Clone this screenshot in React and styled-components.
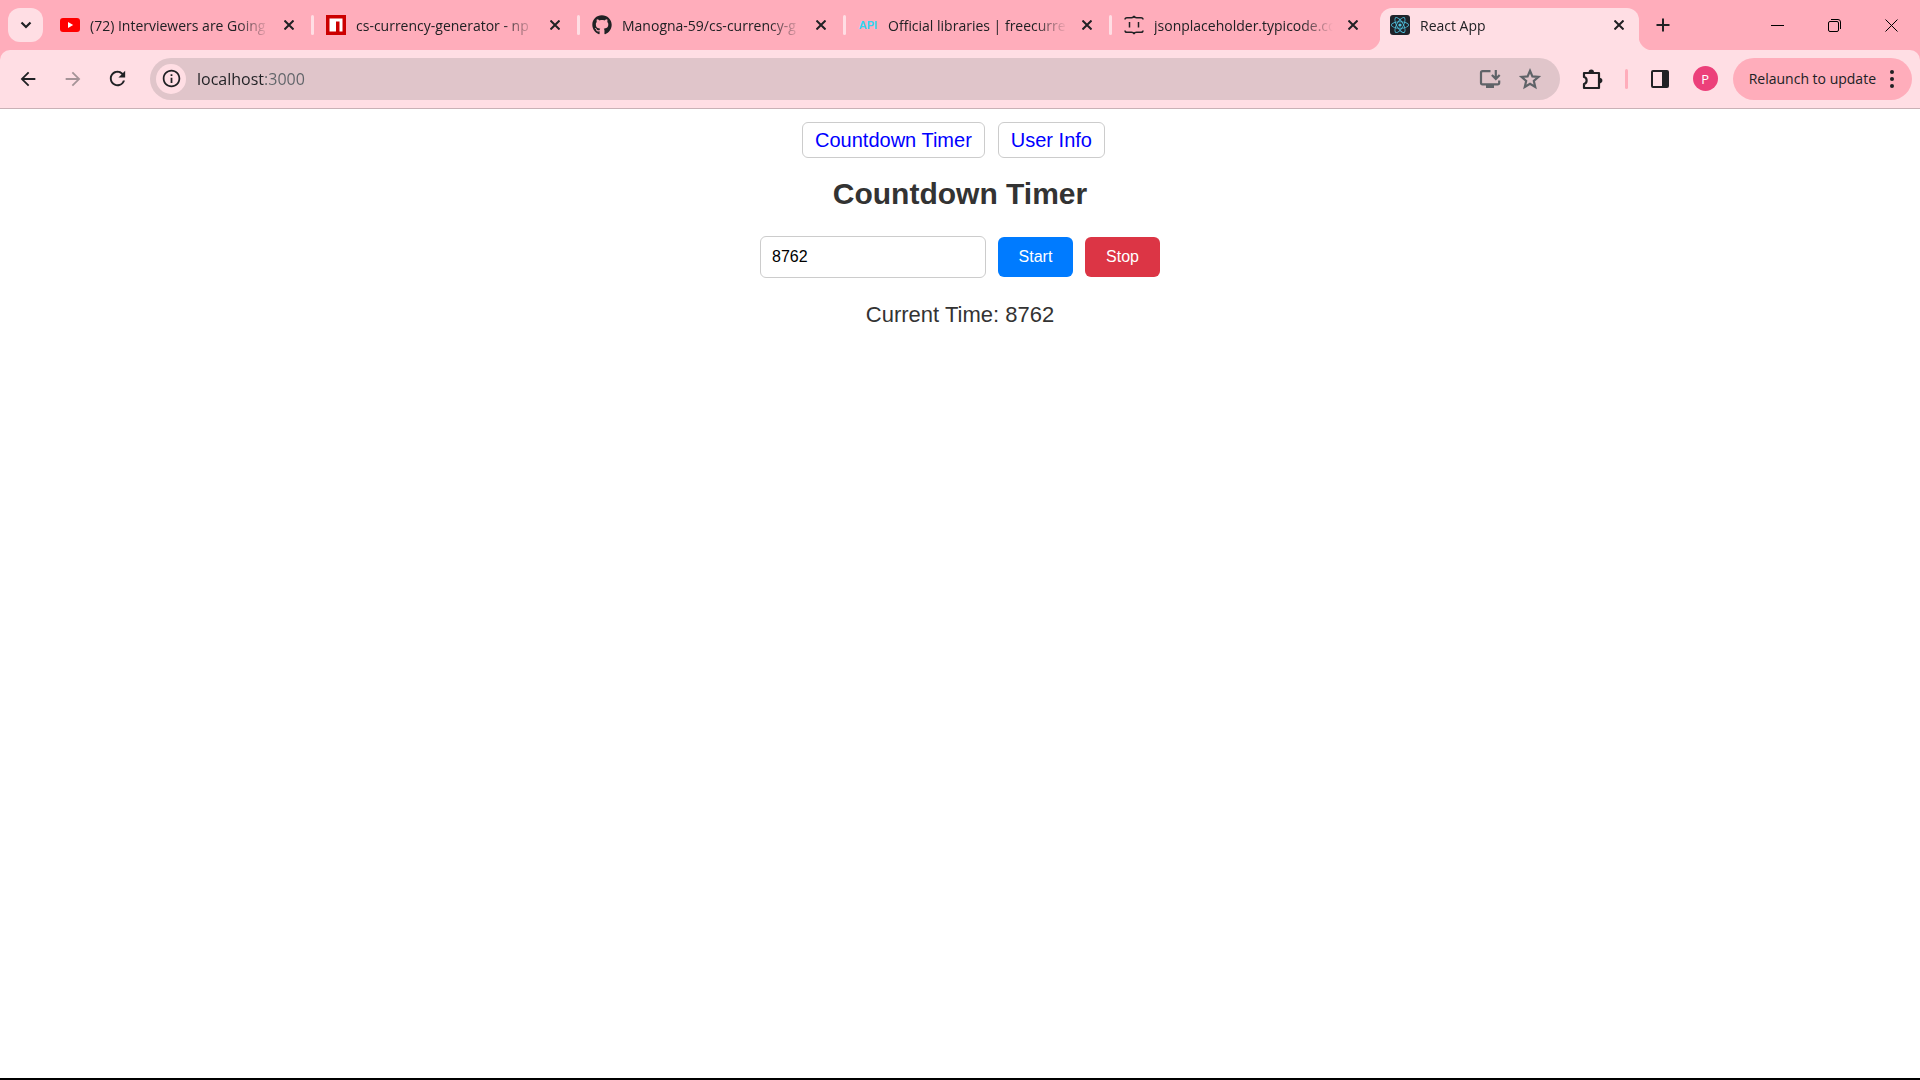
import React, { useEffect, useState } from "react";
import styled, { createGlobalStyle, css } from "styled-components";
import { FaGithub, FaReact } from "react-icons/fa";
import {
  MdArrowBack,
  MdArrowForward,
  MdRefresh,
  MdInfoOutline,
} from "react-icons/md";

const color = {
  frame: "#ffadbb",
  toolbar: "#ffdee4",
  field: "#e0c5ca",
  line: "#c9b1b6",
  ink: "#202124",
  muted: "#5f6368",
};

const uiFont = '"Open Sans", "Noto Sans", sans-serif';
const pageFont = '"Liberation Sans", Arial, sans-serif';

const GlobalStyle = createGlobalStyle`
  *, *::before, *::after { box-sizing: border-box; }
  body { margin: 0; background: #fff; }
  button, input { font: inherit; margin: 0; }
`;

const Window = styled.div`
  display: flex;
  flex-direction: column;
  min-height: 100vh;
  border-bottom: 2px solid #000;
`;

const Frame = styled.header`
  background: ${color.frame};
  color: ${color.ink};
  font-family: ${uiFont};
  font-size: 14px;
`;

const TabStrip = styled.div`
  display: flex;
  height: 50px;
  padding-left: 8px;
`;

const PlainButton = styled.button`
  display: flex;
  align-items: center;
  justify-content: center;
  flex: none;
  padding: 0;
  border: 0;
  background: none;
  color: inherit;
`;

const TabSearch = styled(PlainButton)`
  width: 35px;
  height: 34px;
  margin: 8px 7px 0 0;
  border-radius: 12px;
  background: ${color.toolbar};
`;

const Tabs = styled.div`
  display: flex;
  flex: 0 1 1589px;
  min-width: 0;
`;

const Tab = styled.div`
  display: flex;
  flex: 0 1 266px;
  align-items: center;
  min-width: 0;
  position: relative;
  height: 42px;
  margin-top: 8px;
  padding: 0 2px 8px 10px;

  ${({ $active }) =>
    $active &&
    css`
      flex: 1 1 258px;
      padding-right: 0;
      border-radius: 12px 12px 0 0;
      background: ${color.toolbar};

      &::before,
      &::after {
        content: "";
        position: absolute;
        bottom: 0;
        width: 14px;
        height: 14px;
      }
      &::before {
        right: 100%;
        background: radial-gradient(circle at 0 0, transparent 14px, ${color.toolbar} 15px);
      }
      &::after {
        left: 100%;
        background: radial-gradient(circle at 100% 0, transparent 14px, ${color.toolbar} 15px);
      }
    `}
`;

const Favicon = styled.span`
  display: flex;
  align-items: center;
  justify-content: center;
  flex: none;
  width: 20px;
  height: 20px;
  margin-right: 10px;
`;

const ApiMark = styled.span`
  color: #2fd6f2;
  font-family: ${pageFont};
  font-size: 11px;
  font-weight: 700;
  line-height: 20px;
`;

const ReactTile = styled(Favicon)`
  border-radius: 3px;
  background: #20232a;
  color: #4fc3e0;
`;

const TabTitle = styled.span`
  flex: 1;
  min-width: 0;
  overflow: hidden;
  padding-top: 2px;
  white-space: nowrap;
  line-height: 20px;
  mask-image: linear-gradient(to right, #000 calc(100% - 36px), transparent calc(100% - 4px));
`;

const TabClose = styled(PlainButton)`
  width: 16px;
  height: 20px;
  margin: 0 ${({ $edge }) => ($edge ? 12 : 14)}px 0 8px;
`;

const Separator = styled.span`
  flex: none;
  width: 3px;
  height: 20px;
  margin: 0 ${({ $space = 0 }) => $space}px;
  border-radius: 2px;
  background: ${({ $tone }) => $tone};
`;

const NewTab = styled(PlainButton)`
  width: 48px;
  height: 50px;
`;

const WindowControls = styled.div`
  display: flex;
  margin-left: auto;
`;

const WindowButton = styled(PlainButton)`
  width: 57px;
  height: 50px;
  color: #000;
`;

const Toolbar = styled.div`
  display: flex;
  align-items: center;
  height: 59px;
  padding: 0 8px 1px 5px;
  border-bottom: 1px solid ${color.line};
  border-radius: 10px 10px 0 0;
  background: ${color.toolbar};
`;

const ToolButton = styled(PlainButton)`
  width: 45px;
  height: 42px;
  color: ${({ $dim }) => ($dim ? "#a59397" : color.ink)};
`;

const AddressBar = styled.form`
  display: flex;
  flex: 1;
  align-items: center;
  min-width: 0;
  height: 42px;
  margin: 0 10px;
  padding: 0 10px 0 6px;
  border-radius: 21px;
  background: ${color.field};
`;

const SiteInfo = styled(PlainButton)`
  width: 30px;
  height: 30px;
  border-radius: 50%;
  background: ${color.toolbar};
`;

const Address = styled.input`
  flex: 1;
  min-width: 0;
  height: 30px;
  padding: 0 0 0 11px;
  border: 0;
  outline: 0;
  background: linear-gradient(to right, ${color.ink} 78px, ${color.muted} 78px);
  background-clip: text;
  -webkit-text-fill-color: transparent;
  font-size: 16px;
`;

const FieldButton = styled(PlainButton)`
  width: 40px;
  height: 40px;
  color: ${color.muted};
`;

const Avatar = styled(PlainButton)`
  width: 25px;
  height: 25px;
  margin: 0 15px 0 10px;
  border-radius: 50%;
  background: #ec407a;
  color: #fff;
  font-size: 13px;
`;

const Relaunch = styled(PlainButton)`
  gap: 14px;
  height: 42px;
  padding: 0 18px 0 16px;
  border-radius: 21px;
  background: ${color.frame};
  white-space: nowrap;
`;

const Page = styled.main`
  display: flex;
  flex: 1;
  flex-direction: column;
  align-items: center;
  padding-top: 13px;
  background: #fff;
  color: #333;
  font-family: ${pageFont};
`;

const Nav = styled.nav`
  display: flex;
`;

const NavLink = styled.a`
  margin-right: 13px;
  padding: 6px 12px;
  border: 1px solid #ccc;
  border-radius: 6px;
  color: #00f;
  font-size: 20px;
  line-height: 22px;
  text-decoration: none;
`;

const Heading = styled.h1`
  margin: 18px 0 25px;
  font-size: 30px;
  line-height: 35px;
`;

const TimerForm = styled.form`
  display: flex;
  align-items: center;
  gap: 12px;
`;

const Seconds = styled.input`
  width: 226px;
  height: 42px;
  padding: 0 11px;
  border: 1px solid #ccc;
  border-radius: 6px;
  background: #fff;
  color: #000;
  font-size: 16px;
`;

const TimerButton = styled.button`
  width: 75px;
  height: 40px;
  padding: 0;
  border: 0;
  border-radius: 6px;
  background: ${({ $tone }) => $tone};
  color: #fff;
  font-size: 16px;
`;

const Current = styled.p`
  margin: 24px 0 0;
  font-size: 22px;
  line-height: 26px;
`;

const Cross = ({ size = 10, weight = 2 }) => (
  <svg width={size} height={size} viewBox={`0 0 ${size} ${size}`} stroke="currentColor" strokeWidth={weight}>
    <path d={`M.5 .5L${size - 0.5} ${size - 0.5}M${size - 0.5} .5L.5 ${size - 0.5}`} />
  </svg>
);

const YouTubeIcon = () => (
  <svg width="20" height="20" viewBox="0 0 20 20">
    <rect y="3" width="20" height="14" rx="3" fill="#f00" />
    <path d="M8 7l5.2 3L8 13z" fill="#fff" />
  </svg>
);

const NpmIcon = () => (
  <svg width="20" height="20" viewBox="0 0 20 20">
    <path fill="#c00" d="M0 0h20v20H0z" />
    <path fill="#fff" d="M3.5 3.5h13v13h-3v-10H10v10H3.5z" />
  </svg>
);

const BracesIcon = () => (
  <svg width="20" height="20" viewBox="0 0 20 20" fill="none" stroke={color.ink} strokeWidth="1.5">
    <path d="M1 4.5Q1 2.7 3 2.7H7.5Q9.6 2.7 10 1Q10.4 2.7 12.5 2.7H17Q19 2.7 19 4.5M1 15.5Q1 17.3 3 17.3H7.5Q9.6 17.3 10 19Q10.4 17.3 12.5 17.3H17Q19 17.3 19 15.5M5.5 7v5.5M14.5 7v5.5" />
  </svg>
);

const InstallIcon = () => (
  <svg width="22" height="20" viewBox="0 0 22 20" fill="none" stroke="currentColor" strokeWidth="2.2">
    <path d="M11.5 2.2H3.6q-1.6 0-1.6 1.6v10q0 1.6 1.6 1.6h15q1.6 0 1.6-1.6v-2.2M16.8 1v8M12.9 6l3.9 3.9L20.7 6" />
    <path d="M7 15h8v4H7z" fill="currentColor" stroke="none" />
  </svg>
);

const StarIcon = () => (
  <svg width="24" height="24" viewBox="0 0 22 22" fill="none" stroke="currentColor" strokeWidth="2">
    <path d="M11 3.4L13.2 8.6L18.8 9.1L14.5 12.8L15.8 18.3L11 15.4L6.2 18.3L7.5 12.8L3.2 9.1L8.8 8.6Z" />
  </svg>
);

const ExtensionIcon = () => (
  <svg width="22" height="22" viewBox="0 0 22 22">
    <path
      d="M3 5h15v15H3v-4C6.5 15.2 6.5 9.8 3 9z"
      fill="none"
      stroke="currentColor"
      strokeWidth="2.2"
      strokeLinejoin="round"
    />
    <path d="M7.5 5a2.8 3.4 0 0 1 5.6 0zM18 9.8a3.4 2.8 0 0 1 0 5.6z" fill="currentColor" />
  </svg>
);

const SidePanelIcon = () => (
  <svg width="18" height="18" viewBox="0 0 18 18">
    <rect x="1" y="1" width="16" height="16" rx="1" fill="none" stroke="currentColor" strokeWidth="2" />
    <path d="M11 1h6v16h-6z" fill="currentColor" />
  </svg>
);

const DotsIcon = () => (
  <svg width="4" height="18" viewBox="0 0 4 18" fill="currentColor">
    <circle cx="2" cy="2" r="2" />
    <circle cx="2" cy="9" r="2" />
    <circle cx="2" cy="16" r="2" />
  </svg>
);

const openTabs = [
  { title: "(72) Interviewers are Going", icon: <YouTubeIcon /> },
  { title: "cs-currency-generator - np", icon: <NpmIcon /> },
  { title: "Manogna-59/cs-currency-g", icon: <FaGithub size={20} /> },
  { title: "Official libraries | freecurre", icon: <ApiMark>API</ApiMark> },
  { title: "jsonplaceholder.typicode.co", icon: <BracesIcon /> },
];

function BrowserFrame() {
  return (
    <Frame>
      <TabStrip>
        <TabSearch aria-label="Search tabs">
          <svg width="12" height="8" viewBox="0 0 12 8" fill="none" stroke="currentColor" strokeWidth="2.2">
            <path d="M1.5 1.5L6 6l4.5-4.5" />
          </svg>
        </TabSearch>
        <Tabs>
          {openTabs.map((tab, index) => (
            <Tab key={tab.title}>
              <Favicon>{tab.icon}</Favicon>
              <TabTitle>{tab.title}</TabTitle>
              <TabClose aria-label="Close tab">
                <Cross />
              </TabClose>
              <Separator $tone={index < openTabs.length - 1 ? color.toolbar : "transparent"} />
            </Tab>
          ))}
          <Tab $active>
            <ReactTile>
              <FaReact size={18} />
            </ReactTile>
            <TabTitle>React App</TabTitle>
            <TabClose aria-label="Close tab" $edge>
              <Cross />
            </TabClose>
          </Tab>
        </Tabs>
        <NewTab aria-label="New tab">
          <svg width="14" height="14" viewBox="0 0 14 14" stroke="currentColor" strokeWidth="2">
            <path d="M7 .5v13M.5 7h13" />
          </svg>
        </NewTab>
        <WindowControls>
          <WindowButton aria-label="Minimize">
            <svg width="13" height="13" viewBox="0 0 13 13" stroke="currentColor">
              <path d="M0 6.5h13" />
            </svg>
          </WindowButton>
          <WindowButton aria-label="Restore">
            <svg width="13" height="13" viewBox="0 0 13 13" fill="none" stroke="currentColor">
              <rect x=".5" y="2.5" width="10" height="10" rx="1.5" />
              <path d="M3 .5h7q2.5 0 2.5 2.5v7" />
            </svg>
          </WindowButton>
          <WindowButton aria-label="Close window">
            <Cross size={13} weight={1} />
          </WindowButton>
        </WindowControls>
      </TabStrip>
      <Toolbar>
        <ToolButton aria-label="Back">
          <MdArrowBack size={22} />
        </ToolButton>
        <ToolButton aria-label="Forward" $dim>
          <MdArrowForward size={22} />
        </ToolButton>
        <ToolButton aria-label="Reload">
          <MdRefresh size={23} />
        </ToolButton>
        <AddressBar onSubmit={(event) => event.preventDefault()}>
          <SiteInfo type="button" aria-label="View site information">
            <MdInfoOutline size={21} />
          </SiteInfo>
          <Address aria-label="Address" defaultValue="localhost:3000" spellCheck={false} />
          <FieldButton type="button" aria-label="Install app">
            <InstallIcon />
          </FieldButton>
          <FieldButton type="button" aria-label="Bookmark this tab">
            <StarIcon />
          </FieldButton>
        </AddressBar>
        <ToolButton aria-label="Extensions">
          <ExtensionIcon />
        </ToolButton>
        <Separator $tone={color.frame} $space={10} />
        <ToolButton aria-label="Side panel">
          <SidePanelIcon />
        </ToolButton>
        <Avatar aria-label="Profile">P</Avatar>
        <Relaunch>
          Relaunch to update
          <DotsIcon />
        </Relaunch>
      </Toolbar>
    </Frame>
  );
}

function CountdownTimer() {
  const [time, setTime] = useState("8762");
  const [running, setRunning] = useState(false);

  useEffect(() => {
    if (!running) return undefined;
    const id = setInterval(() => setTime((value) => String(Math.max(0, Number(value) - 1))), 1000);
    return () => clearInterval(id);
  }, [running]);

  return (
    <>
      <Heading>Countdown Timer</Heading>
      <TimerForm onSubmit={(event) => event.preventDefault()}>
        <Seconds
          aria-label="Seconds"
          inputMode="numeric"
          value={time}
          onChange={(event) => setTime(event.target.value)}
        />
        <TimerButton type="button" $tone="#007bff" onClick={() => setRunning(true)}>
          Start
        </TimerButton>
        <TimerButton type="button" $tone="#dc3545" onClick={() => setRunning(false)}>
          Stop
        </TimerButton>
      </TimerForm>
      <Current>Current Time: {time}</Current>
    </>
  );
}

export default function App() {
  return (
    <Window>
      <GlobalStyle />
      <BrowserFrame />
      <Page>
        <Nav>
          <NavLink href="#countdown">Countdown Timer</NavLink>
          <NavLink href="#user">User Info</NavLink>
        </Nav>
        <CountdownTimer />
      </Page>
    </Window>
  );
}
